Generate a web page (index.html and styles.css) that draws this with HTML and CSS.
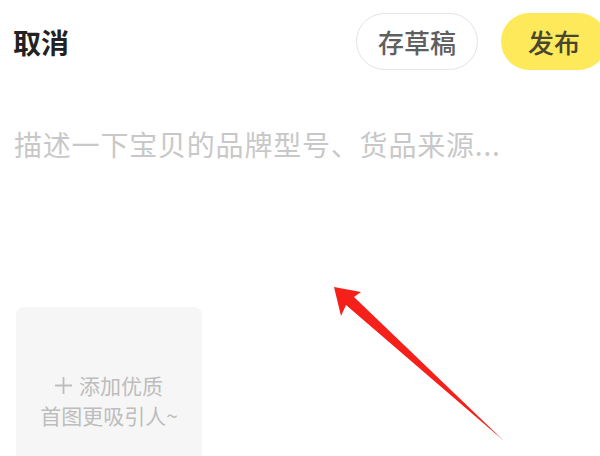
FILE: index.html
```html
<!DOCTYPE html>
<html lang="zh-CN">
<head>
<meta charset="utf-8">
<title>发布宝贝</title>
<link rel="stylesheet" href="styles.css">
</head>
<body>
<div class="page">
  <header class="topbar">
    <span class="cancel">取消</span>
    <div class="actions">
      <button class="btn draft">存草稿</button>
      <button class="btn publish">发布</button>
    </div>
  </header>
  <div class="desc">描述一下宝贝的品牌型号、货品来源...</div>
  <div class="uploader">
    <div class="upload-text">
      <span class="line"><svg class="plus" viewBox="0 0 17 17" width="17" height="17"><path d="M0 8.5H17M8.5 0V17" stroke="#bdbdbd" stroke-width="1.8" fill="none"/></svg>添加优质</span>
      <span class="line">首图更吸引人~</span>
    </div>
  </div>
  <svg class="arrow" viewBox="0 0 600 456" width="600" height="456">
    <polygon points="334,287 361,292 354,297 504,441 346,305 341,316" fill="#f5201a"/>
  </svg>
</div>
</body>
</html>
```

FILE: styles.css
```css
html, body {
  margin: 0;
  padding: 0;
  background: #fff;
}

.page {
  position: relative;
  width: 600px;
  height: 456px;
  overflow: hidden;
  font-family: "Noto Sans CJK SC", "Noto Sans", sans-serif;
}

.topbar {
  display: flex;
  align-items: center;
  justify-content: space-between;
  height: 57px;
  padding: 13px 0 0 13px;
}

.cancel {
  font-size: 28px;
  font-weight: 700;
  color: #222;
  line-height: 1;
}

.actions {
  display: flex;
  align-items: center;
  gap: 23px;
  margin-right: -7px;
}

.btn {
  height: 57px;
  border-radius: 29px;
  font-family: inherit;
  font-size: 26px;
  font-weight: 500;
  line-height: 1;
  cursor: pointer;
}

.draft {
  padding: 0 21px;
  background: #fff;
  border: 1px solid #e4e4e4;
  color: #5f5f5f;
}

.publish {
  padding: 0 27px;
  background: #fde95a;
  border: none;
  color: #4a4530;
}

.desc {
  margin-top: 54px;
  padding-left: 14px;
  font-size: 28px;
  line-height: 40px;
  letter-spacing: 0.8px;
  color: #c8c8c8;
}

.uploader {
  display: flex;
  align-items: center;
  justify-content: center;
  width: 186px;
  height: 186px;
  margin: 143px 0 0 16px;
  background: #f6f6f6;
  border-radius: 8px;
}

.upload-text {
  display: flex;
  flex-direction: column;
  align-items: center;
  font-size: 21px;
  line-height: 30px;
  color: #bdbdbd;
}

.line {
  display: flex;
  align-items: center;
}

.plus {
  margin-right: 7px;
}

.arrow {
  position: absolute;
  left: 0;
  top: 0;
  pointer-events: none;
}
```
